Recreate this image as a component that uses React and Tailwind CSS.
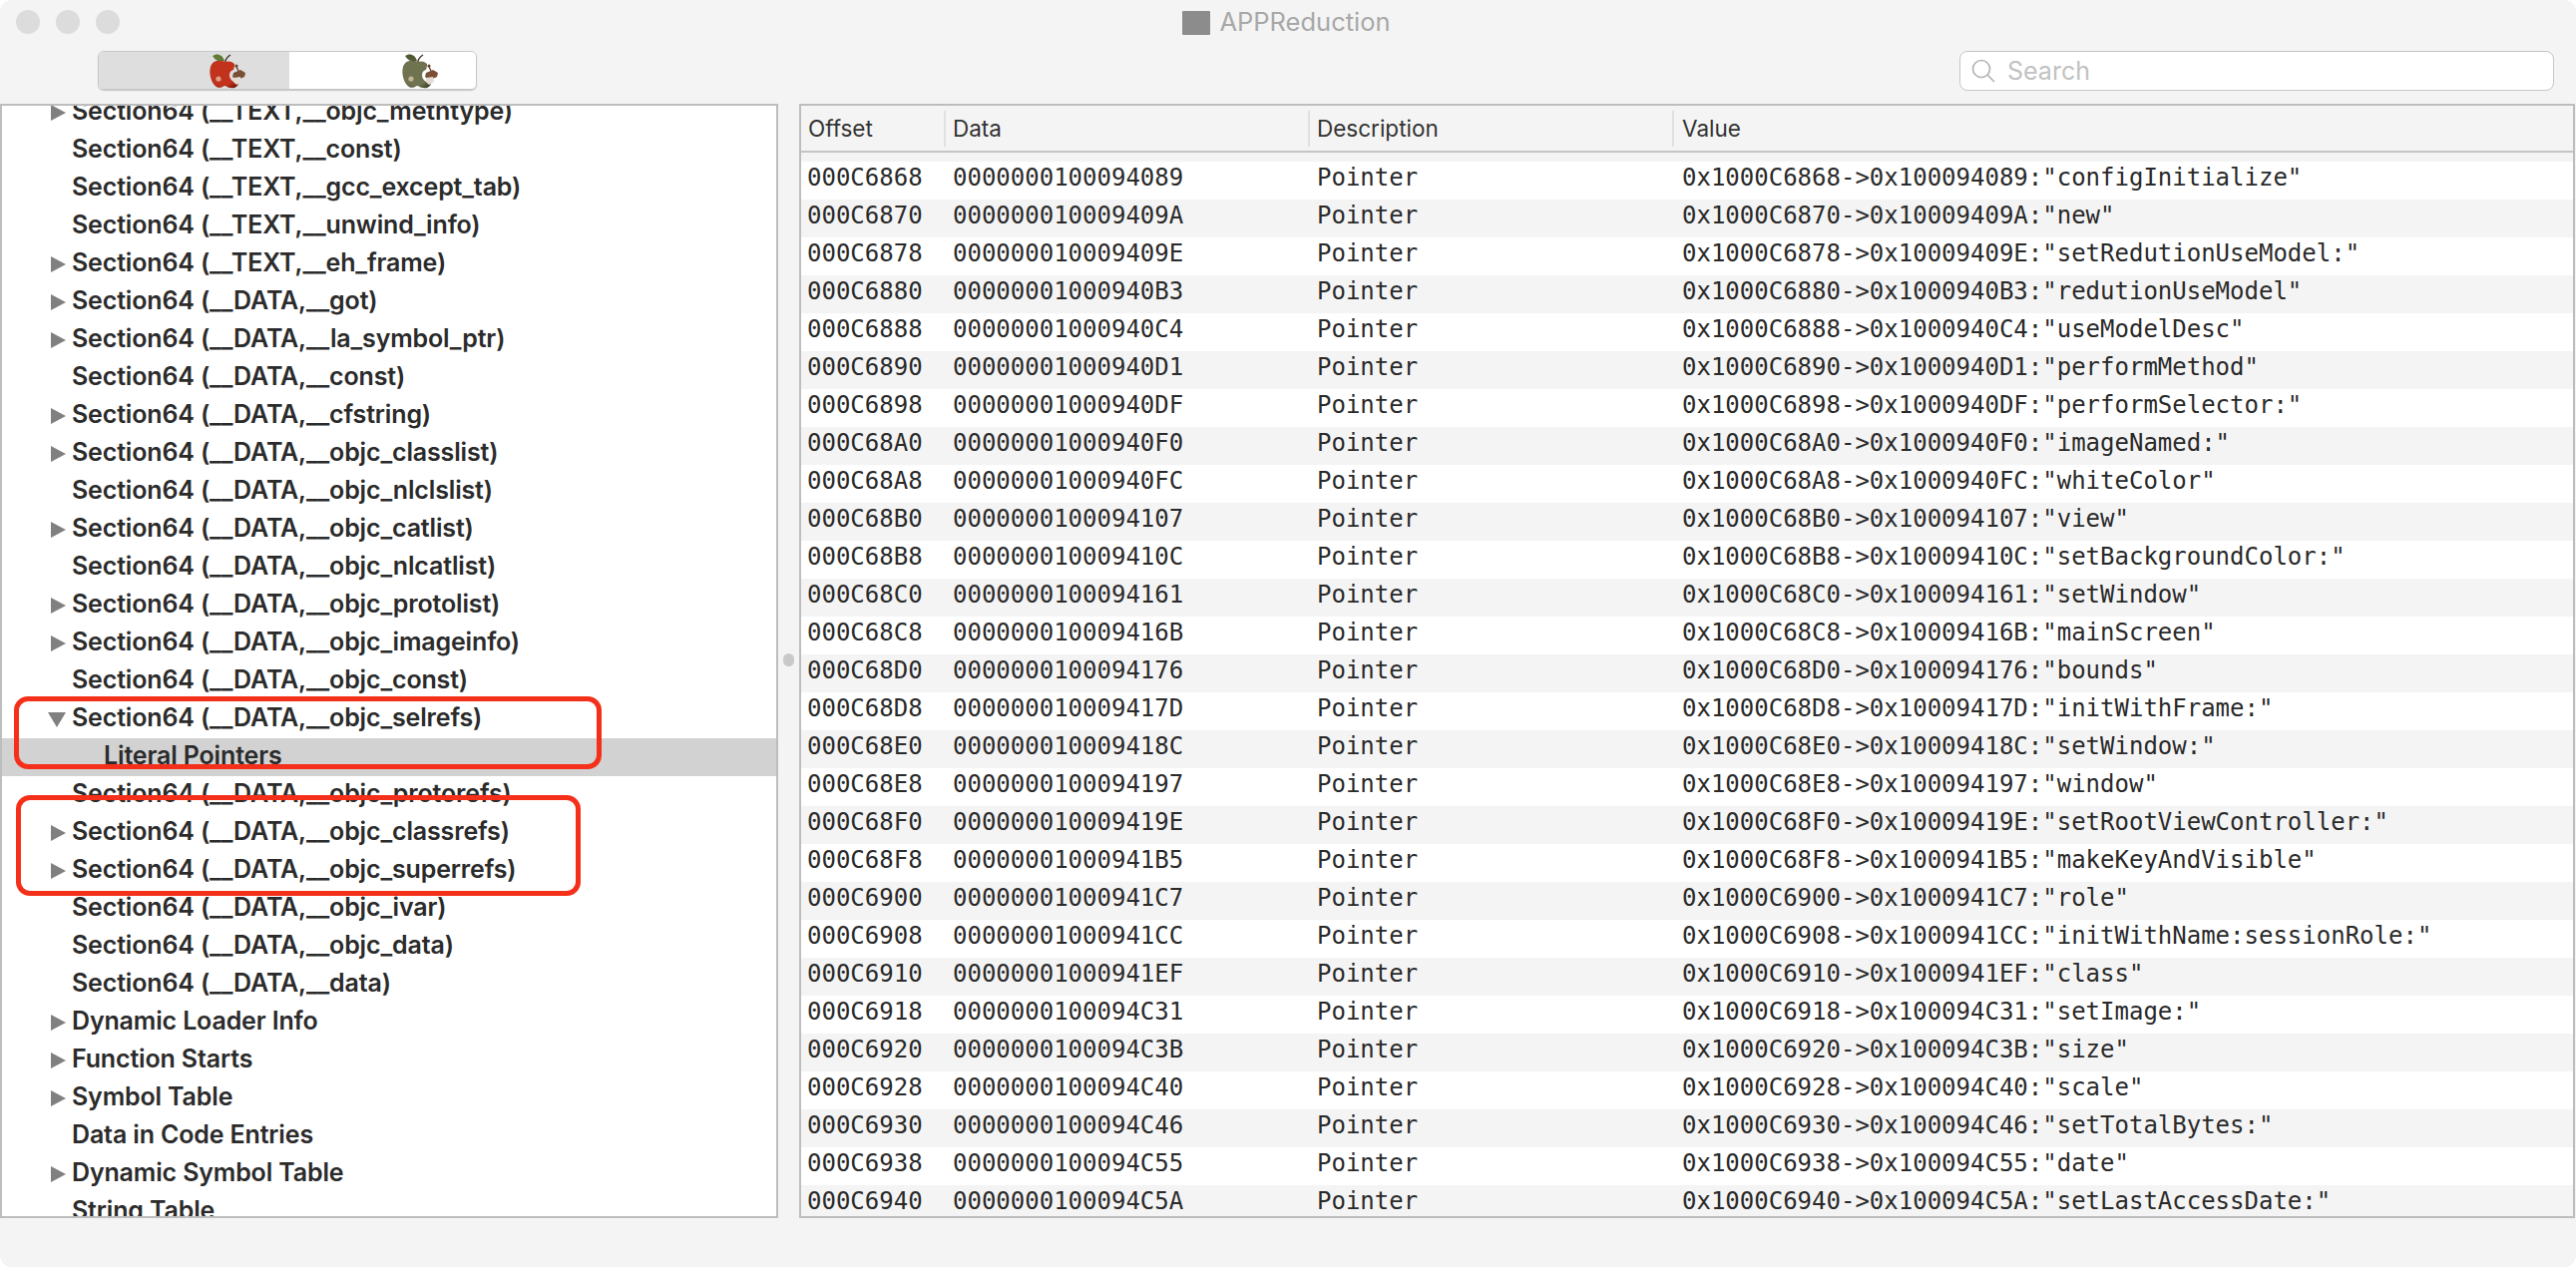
const treeRows = [
  { label: 'Section64 (__TEXT,__objc_methtype)', arrow: 'right' },
  { label: 'Section64 (__TEXT,__const)' },
  { label: 'Section64 (__TEXT,__gcc_except_tab)' },
  { label: 'Section64 (__TEXT,__unwind_info)' },
  { label: 'Section64 (__TEXT,__eh_frame)', arrow: 'right' },
  { label: 'Section64 (__DATA,__got)', arrow: 'right' },
  { label: 'Section64 (__DATA,__la_symbol_ptr)', arrow: 'right' },
  { label: 'Section64 (__DATA,__const)' },
  { label: 'Section64 (__DATA,__cfstring)', arrow: 'right' },
  { label: 'Section64 (__DATA,__objc_classlist)', arrow: 'right' },
  { label: 'Section64 (__DATA,__objc_nlclslist)' },
  { label: 'Section64 (__DATA,__objc_catlist)', arrow: 'right' },
  { label: 'Section64 (__DATA,__objc_nlcatlist)' },
  { label: 'Section64 (__DATA,__objc_protolist)', arrow: 'right' },
  { label: 'Section64 (__DATA,__objc_imageinfo)', arrow: 'right' },
  { label: 'Section64 (__DATA,__objc_const)' },
  { label: 'Section64 (__DATA,__objc_selrefs)', arrow: 'down' },
  { label: 'Literal Pointers', selected: true },
  { label: 'Section64 (__DATA,__objc_protorefs)' },
  { label: 'Section64 (__DATA,__objc_classrefs)', arrow: 'right' },
  { label: 'Section64 (__DATA,__objc_superrefs)', arrow: 'right' },
  { label: 'Section64 (__DATA,__objc_ivar)' },
  { label: 'Section64 (__DATA,__objc_data)' },
  { label: 'Section64 (__DATA,__data)' },
  { label: 'Dynamic Loader Info', arrow: 'right' },
  { label: 'Function Starts', arrow: 'right' },
  { label: 'Symbol Table', arrow: 'right' },
  { label: 'Data in Code Entries' },
  { label: 'Dynamic Symbol Table', arrow: 'right' },
  { label: 'String Table' },
];

const pointers = [
  ['000C6868', '0000000100094089', 'configInitialize'],
  ['000C6870', '000000010009409A', 'new'],
  ['000C6878', '000000010009409E', 'setRedutionUseModel:'],
  ['000C6880', '00000001000940B3', 'redutionUseModel'],
  ['000C6888', '00000001000940C4', 'useModelDesc'],
  ['000C6890', '00000001000940D1', 'performMethod'],
  ['000C6898', '00000001000940DF', 'performSelector:'],
  ['000C68A0', '00000001000940F0', 'imageNamed:'],
  ['000C68A8', '00000001000940FC', 'whiteColor'],
  ['000C68B0', '0000000100094107', 'view'],
  ['000C68B8', '000000010009410C', 'setBackgroundColor:'],
  ['000C68C0', '0000000100094161', 'setWindow'],
  ['000C68C8', '000000010009416B', 'mainScreen'],
  ['000C68D0', '0000000100094176', 'bounds'],
  ['000C68D8', '000000010009417D', 'initWithFrame:'],
  ['000C68E0', '000000010009418C', 'setWindow:'],
  ['000C68E8', '0000000100094197', 'window'],
  ['000C68F0', '000000010009419E', 'setRootViewController:'],
  ['000C68F8', '00000001000941B5', 'makeKeyAndVisible'],
  ['000C6900', '00000001000941C7', 'role'],
  ['000C6908', '00000001000941CC', 'initWithName:sessionRole:'],
  ['000C6910', '00000001000941EF', 'class'],
  ['000C6918', '0000000100094C31', 'setImage:'],
  ['000C6920', '0000000100094C3B', 'size'],
  ['000C6928', '0000000100094C40', 'scale'],
  ['000C6930', '0000000100094C46', 'setTotalBytes:'],
  ['000C6938', '0000000100094C55', 'date'],
  ['000C6940', '0000000100094C5A', 'setLastAccessDate:'],
];

function AppleIcon({ id, light, dark, leaf }) {
  return (
    <svg width="40" height="37" viewBox="0 0 40 37">
      <defs>
        <radialGradient id={id} cx="0.45" cy="0.45" r="0.65">
          <stop offset="0" stopColor={light} />
          <stop offset="0.7" stopColor={light} />
          <stop offset="1" stopColor={dark} />
        </radialGradient>
      </defs>
      {/* apple body with the bite on its right */}
      <path d="M18 9C13 6 5 7 3 14c-2 7 1 17 6 20 3 2 6 0 8-1 2 0 3 2 6 2 4 1 7-1 8-4-3-1-6-2-8-5-2-4-1-8 3-9 1-2 1-5 1-6-3-3-7-3-9-2z" fill={`url(#${id})`} />
      <path d="M5 3c4-3 10-2 12 5-5 1-9 0-12-5z" fill={leaf} />
      <path d="M18 9c0-3 2-5 5-7" fill="none" stroke="#4a3a2a" strokeWidth="1.5" />
      {/* worm poking out of the bite */}
      <path d="M26 20l7-3 5 3-1 4-7 3-5-3z" fill="#7a4f36" />
      <path d="M26 25l7-1 1 5-5 3-3-3z" fill="#e4dcd4" />
      <circle cx="29" cy="13" r="1.6" fill="#6a4430" />
      <path d="M29 14l2 4" stroke="#6a4430" strokeWidth="1.4" />
      <circle cx="11" cy="26" r="2.6" fill="#e6c8a8" opacity="0.75" />
    </svg>
  );
}

function TreeRow({ row }) {
  return (
    <div className={`relative flex h-[38px] items-center whitespace-nowrap text-[25px] font-semibold tracking-[-0.15px] text-[#2b2b2b] ${row.selected ? 'bg-[#d2d2d2] pl-[102px]' : 'pl-[70px]'}`}>
      {row.arrow === 'right' && (
        <div className="absolute left-[49px] top-[11px] h-0 w-0 border-y-[8.5px] border-l-[15px] border-y-transparent border-l-[#808080]" />
      )}
      {row.arrow === 'down' && (
        <div className="absolute left-[46px] top-[12px] h-0 w-0 border-x-[9.5px] border-t-[15px] border-x-transparent border-t-[#808080]" />
      )}
      <span className="-mt-[3px]">{row.label}</span>
    </div>
  );
}

function PointerRow({ row, index }) {
  const [offset, data, name] = row;
  return (
    <div className={`flex h-[38px] items-center whitespace-nowrap pb-[6px] font-['DejaVu_Sans_Mono',monospace] text-[24px] text-[#2a2a2a] ${index % 2 === 0 ? 'bg-white' : 'bg-[#f4f4f4]'}`}>
      <div className="w-[145px] pl-[6px]">{offset}</div>
      <div className="w-[365px] pl-[7px]">{data}</div>
      <div className="w-[365px] pl-[7px]">Pointer</div>
      <div className="pl-[8px]">{`0x1${offset}->0x${data.slice(7)}:"${name}"`}</div>
    </div>
  );
}

export default function App() {
  return (
    <div className="h-[1270px] w-[2582px] overflow-hidden bg-white font-['Inter',sans-serif]">
      <div className="relative flex h-full flex-col overflow-hidden rounded-[12px] bg-[#f4f4f4]">
        <div className="grid h-[44px] grid-cols-[1fr_auto_1fr] items-center">
          <div className="flex gap-[16px] pl-[16px]">
            <div className="h-[24px] w-[24px] rounded-full bg-[#dcdcdc]" />
            <div className="h-[24px] w-[24px] rounded-full bg-[#dcdcdc]" />
            <div className="h-[24px] w-[24px] rounded-full bg-[#dcdcdc]" />
          </div>
          <div className="mr-[3px] flex items-center gap-[9px] pt-[1px] text-[25.5px] text-[#a8a8a8]">
            <div className="h-[24px] w-[28px] rounded-[1px] bg-[#8c8c8c]" />
            <span>APPReduction</span>
          </div>
          <div />
        </div>

        <div className="flex h-[60px] items-start justify-between pl-[98px] pr-[22px] pt-[7px]">
          <div className="flex h-[39px] w-[380px] overflow-hidden rounded-[6px] border border-[#c8c8c8] shadow-[0_1px_1px_rgba(0,0,0,0.2)]">
            <div className="w-[191px] bg-[#dedede] pl-[109px] pt-[1px]">
              <AppleIcon id="apple-red" light="#c2321c" dark="#7c1a0c" leaf="#5f7a35" />
            </div>
            <div className="flex-1 bg-white pl-[111px] pt-[1px]">
              <AppleIcon id="apple-olive" light="#6f7350" dark="#43462c" leaf="#4f5a35" />
            </div>
          </div>
          <div className="flex h-[40px] w-[596px] items-center gap-[10px] rounded-[8px] border border-[#c6c6c6] bg-white pl-[10px]">
            <svg width="26" height="26" viewBox="0 0 26 26" fill="none" stroke="#b4b4b4" strokeWidth="1.7">
              <circle cx="11" cy="11" r="8.5" />
              <path d="M17 17l7 7" />
            </svg>
            <span className="ml-[1px] pt-[1px] text-[25px] text-[#c2c2c2]">Search</span>
          </div>
        </div>

        <div className="flex min-h-0 flex-1">
          <div className="h-full w-[780px] overflow-hidden border-2 border-[#bdbdbd] bg-white">
            <div className="-mt-[12px]">
              {treeRows.map((row) => (
                <TreeRow key={row.label} row={row} />
              ))}
            </div>
          </div>
          <div className="flex w-[21px] items-start justify-center pt-[551px]">
            <div className="h-[13px] w-[11px] rounded-full bg-[#c9c9c9]" />
          </div>
          <div className="flex h-full w-[1780px] flex-col overflow-hidden border-2 border-[#bdbdbd] bg-[#f4f4f4]">
            <div className="flex h-[47px] flex-none items-center border-b-2 border-[#c4c4c4] text-[22.5px] text-[#333333]">
              <div className="flex h-[36px] w-[145px] items-center border-r-2 border-[#e0e0e0] pl-[7px]">Offset</div>
              <div className="flex h-[36px] w-[365px] items-center border-r-2 border-[#e0e0e0] pl-[7px]">Data</div>
              <div className="flex h-[36px] w-[365px] items-center border-r-2 border-[#e0e0e0] pl-[7px]">Description</div>
              <div className="pl-[8px]">Value</div>
            </div>
            <div className="pt-[9px]">
              {pointers.map((row, index) => (
                <PointerRow key={row[0]} row={row} index={index} />
              ))}
            </div>
          </div>
        </div>

        <div className="h-[49px] flex-none" />

        {/* red callouts drawn over the tree */}
        <div className="absolute left-[14px] top-[698px] h-[73px] w-[589px] rounded-[14px] border-[5px] border-[#f5301a]" />
        <div className="absolute left-[16px] top-[797px] h-[101px] w-[566px] rounded-[14px] border-[5px] border-[#f5301a]" />
      </div>
    </div>
  );
}
